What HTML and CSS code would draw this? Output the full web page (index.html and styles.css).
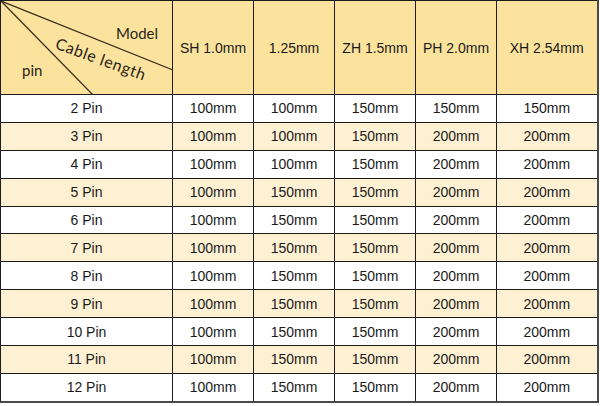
FILE: index.html
```html
<!DOCTYPE html>
<html>
<head>
<meta charset="utf-8">
<link rel="stylesheet" href="styles.css">
</head>
<body>
<table class="spec">
  <colgroup>
    <col class="c-pin"><col class="c-n"><col class="c-n"><col class="c-n"><col class="c-n"><col class="c-w">
  </colgroup>
  <thead>
    <tr class="head">
      <th class="corner">
        <div class="corner-box">
          <svg class="diag" width="172" height="94" viewBox="0 0 172 94">
            <line x1="0" y1="0" x2="172" y2="69"/>
            <line x1="0" y1="0" x2="92" y2="94"/>
          </svg>
          <span class="lbl model">Model</span>
          <span class="lbl cable">Cable length</span>
          <span class="lbl pin">pin</span>
        </div>
      </th>
      <th>SH 1.0mm</th>
      <th>1.25mm</th>
      <th>ZH 1.5mm</th>
      <th>PH 2.0mm</th>
      <th>XH 2.54mm</th>
    </tr>
  </thead>
  <tbody>
    <tr><td>2 Pin</td><td>100mm</td><td>100mm</td><td>150mm</td><td>150mm</td><td>150mm</td></tr>
    <tr class="alt"><td>3 Pin</td><td>100mm</td><td>100mm</td><td>150mm</td><td>200mm</td><td>200mm</td></tr>
    <tr><td>4 Pin</td><td>100mm</td><td>100mm</td><td>150mm</td><td>200mm</td><td>200mm</td></tr>
    <tr class="alt"><td>5 Pin</td><td>100mm</td><td>150mm</td><td>150mm</td><td>200mm</td><td>200mm</td></tr>
    <tr><td>6 Pin</td><td>100mm</td><td>150mm</td><td>150mm</td><td>200mm</td><td>200mm</td></tr>
    <tr class="alt"><td>7 Pin</td><td>100mm</td><td>150mm</td><td>150mm</td><td>200mm</td><td>200mm</td></tr>
    <tr><td>8 Pin</td><td>100mm</td><td>150mm</td><td>150mm</td><td>200mm</td><td>200mm</td></tr>
    <tr class="alt"><td>9 Pin</td><td>100mm</td><td>150mm</td><td>150mm</td><td>200mm</td><td>200mm</td></tr>
    <tr><td>10 Pin</td><td>100mm</td><td>150mm</td><td>150mm</td><td>200mm</td><td>200mm</td></tr>
    <tr class="alt"><td>11 Pin</td><td>100mm</td><td>150mm</td><td>150mm</td><td>200mm</td><td>200mm</td></tr>
    <tr><td>12 Pin</td><td>100mm</td><td>150mm</td><td>150mm</td><td>200mm</td><td>200mm</td></tr>
  </tbody>
</table>
</body>
</html>
```
FILE: styles.css
```css
html, body {
  margin: 0;
  padding: 0;
  background: #ffffff;
}

.spec {
  border-collapse: collapse;
  table-layout: fixed;
  width: 597px;
  font-family: "Liberation Sans", Arial, sans-serif;
  font-size: 14px;
  color: #1a1a1a;
  border-right: 2px solid #4a4a4a;
  border-bottom: 2px solid #4a4a4a;
}

.c-pin { width: 172px; }
.c-n { width: 81px; }
.c-w { width: 101px; }

.spec th,
.spec td {
  border: 1px solid #1c1c1c;
  padding: 0;
  text-align: center;
  vertical-align: middle;
  font-weight: normal;
}

.head th {
  background: #fbe39e;
  height: 93px;
}

.spec td {
  height: 26.9px;
  background: #ffffff;
}

.spec tr.alt td {
  background: #fef1d3;
}

.corner {
  position: relative;
}

.corner-box {
  position: relative;
  width: 171px;
  height: 93px;
  overflow: hidden;
}

.diag {
  position: absolute;
  left: 0;
  top: 0;
}

.diag line {
  stroke: #3b2f1c;
  stroke-width: 1.3;
}

.lbl {
  position: absolute;
  font-family: Lato, "Open Sans", sans-serif;
  font-size: 15px;
  color: #2a2418;
  white-space: nowrap;
  line-height: 1;
}

.model {
  left: 115px;
  top: 25px;
}

.pin {
  left: 21px;
  top: 62px;
}

.cable {
  left: 58px;
  top: 34px;
  font-size: 16px;
  letter-spacing: 0.6px;
  transform-origin: left top;
  transform: rotate(20deg);
}
```
